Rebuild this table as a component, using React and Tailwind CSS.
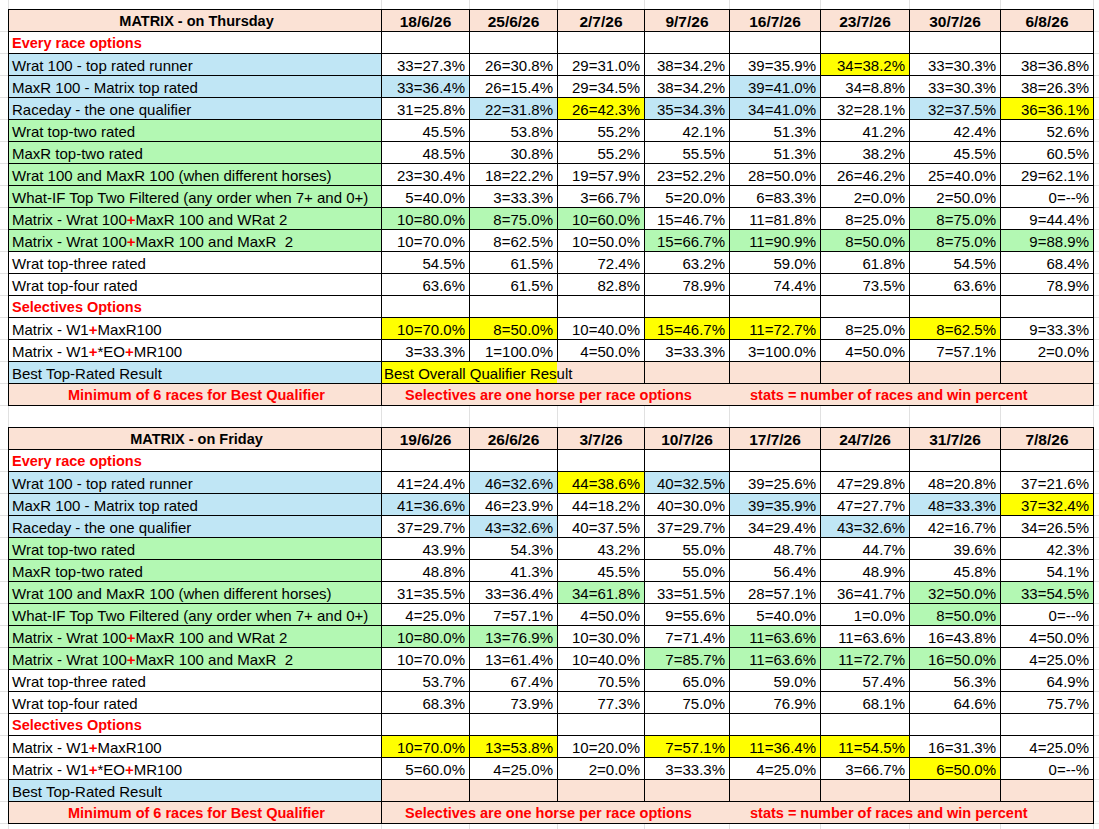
import React from "react";

const W = ["w-[88px]", "w-[88px]", "w-[87px]", "w-[85px]", "w-[91px]", "w-[89px]", "w-[91px]", "w-[93px]"];

const BG = {
  B: "bg-[#c0e6f5]",
  G: "bg-[#b3f8b3]",
  Y: "bg-[#ffff00]",
  P: "bg-[#fbe2d5]",
  W: "bg-white",
};

// "Y34=38.2%" -> yellow cell, plain value -> white cell
const cell = (v) => {
  const k = v[0];
  if (k === "Y" || k === "B" || k === "G") return { bg: BG[k], text: v.slice(1) };
  return { bg: BG.W, text: v };
};

const Plus = () => <span className="text-[#ff0000] font-bold">+</span>;

const thursday = {
  title: "MATRIX - on Thursday",
  dates: ["18/6/26", "25/6/26", "2/7/26", "9/7/26", "16/7/26", "23/7/26", "30/7/26", "6/8/26"],
  rows: [
    ["33=27.3%", "26=30.8%", "29=31.0%", "38=34.2%", "39=35.9%", "Y34=38.2%", "33=30.3%", "38=36.8%"],
    ["B33=36.4%", "26=15.4%", "29=34.5%", "38=34.2%", "B39=41.0%", "34=8.8%", "33=30.3%", "38=26.3%"],
    ["31=25.8%", "B22=31.8%", "Y26=42.3%", "B35=34.3%", "B34=41.0%", "32=28.1%", "B32=37.5%", "Y36=36.1%"],
    ["45.5%", "53.8%", "55.2%", "42.1%", "51.3%", "41.2%", "42.4%", "52.6%"],
    ["48.5%", "30.8%", "55.2%", "55.5%", "51.3%", "38.2%", "45.5%", "60.5%"],
    ["23=30.4%", "18=22.2%", "19=57.9%", "23=52.2%", "28=50.0%", "26=46.2%", "25=40.0%", "29=62.1%"],
    ["5=40.0%", "3=33.3%", "3=66.7%", "5=20.0%", "6=83.3%", "2=0.0%", "2=50.0%", "0=--%"],
    ["G10=80.0%", "G8=75.0%", "G10=60.0%", "15=46.7%", "11=81.8%", "8=25.0%", "G8=75.0%", "9=44.4%"],
    ["10=70.0%", "8=62.5%", "10=50.0%", "G15=66.7%", "G11=90.9%", "G8=50.0%", "G8=75.0%", "G9=88.9%"],
    ["54.5%", "61.5%", "72.4%", "63.2%", "59.0%", "61.8%", "54.5%", "68.4%"],
    ["63.6%", "61.5%", "82.8%", "78.9%", "74.4%", "73.5%", "63.6%", "78.9%"],
  ],
  sel: [
    ["Y10=70.0%", "Y8=50.0%", "10=40.0%", "Y15=46.7%", "Y11=72.7%", "8=25.0%", "Y8=62.5%", "9=33.3%"],
    ["3=33.3%", "1=100.0%", "4=50.0%", "3=33.3%", "3=100.0%", "4=50.0%", "7=57.1%", "2=0.0%"],
  ],
  bestOverall: true,
};

const friday = {
  title: "MATRIX - on Friday",
  dates: ["19/6/26", "26/6/26", "3/7/26", "10/7/26", "17/7/26", "24/7/26", "31/7/26", "7/8/26"],
  rows: [
    ["41=24.4%", "B46=32.6%", "Y44=38.6%", "B40=32.5%", "39=25.6%", "47=29.8%", "48=20.8%", "37=21.6%"],
    ["B41=36.6%", "46=23.9%", "44=18.2%", "40=30.0%", "B39=35.9%", "47=27.7%", "B48=33.3%", "Y37=32.4%"],
    ["37=29.7%", "B43=32.6%", "40=37.5%", "37=29.7%", "34=29.4%", "B43=32.6%", "42=16.7%", "34=26.5%"],
    ["43.9%", "54.3%", "43.2%", "55.0%", "48.7%", "44.7%", "39.6%", "42.3%"],
    ["48.8%", "41.3%", "45.5%", "55.0%", "56.4%", "48.9%", "45.8%", "54.1%"],
    ["31=35.5%", "33=36.4%", "G34=61.8%", "33=51.5%", "28=57.1%", "36=41.7%", "G32=50.0%", "G33=54.5%"],
    ["4=25.0%", "7=57.1%", "4=50.0%", "9=55.6%", "5=40.0%", "1=0.0%", "G8=50.0%", "0=--%"],
    ["G10=80.0%", "G13=76.9%", "10=30.0%", "7=71.4%", "G11=63.6%", "11=63.6%", "16=43.8%", "4=50.0%"],
    ["10=70.0%", "13=61.4%", "10=40.0%", "G7=85.7%", "G11=63.6%", "G11=72.7%", "G16=50.0%", "4=25.0%"],
    ["53.7%", "67.4%", "70.5%", "65.0%", "59.0%", "57.4%", "56.3%", "64.9%"],
    ["68.3%", "73.9%", "77.3%", "75.0%", "76.9%", "68.1%", "64.6%", "75.7%"],
  ],
  sel: [
    ["Y10=70.0%", "Y13=53.8%", "10=20.0%", "Y7=57.1%", "Y11=36.4%", "Y11=54.5%", "16=31.3%", "4=25.0%"],
    ["5=60.0%", "4=25.0%", "2=0.0%", "3=33.3%", "4=25.0%", "3=66.7%", "Y6=50.0%", "0=--%"],
  ],
  bestOverall: false,
};

const labels = [
  { t: "Wrat 100 - top rated runner", bg: BG.B },
  { t: "MaxR 100 - Matrix top rated", bg: BG.B },
  { t: "Raceday - the one qualifier", bg: BG.B },
  { t: "Wrat top-two rated", bg: BG.G },
  { t: "MaxR top-two rated", bg: BG.G },
  { t: "Wrat 100 and MaxR 100 (when different horses)", bg: BG.G },
  { t: "What-IF Top Two Filtered (any order when 7+ and 0+)", bg: BG.G },
  { t: <>Matrix - Wrat 100<Plus />MaxR 100 and WRat 2</>, bg: BG.G },
  { t: <>Matrix - Wrat 100<Plus />MaxR 100 and MaxR&nbsp; 2</>, bg: BG.G },
  { t: "Wrat top-three rated", bg: BG.W },
  { t: "Wrat top-four rated", bg: BG.W },
];

const selLabels = [
  <>Matrix - W1<Plus />MaxR100</>,
  <>Matrix - W1<Plus />*EO<Plus />MR100</>,
];

const Margin = () => <div className="w-[8px] h-full border-b border-[#e1e1e1]" />;
const RightMargin = () => <div className="flex-1 h-full border-b border-[#e1e1e1]" />;

const Row = ({ children, top }) => (
  <div className={`flex ${top ? "h-[23px]" : "h-[22px]"}`}>
    <Margin />
    {children}
    <RightMargin />
  </div>
);

const Label = ({ bg, top, children, className = "" }) => (
  <div
    className={`w-[374px] h-full shrink-0 border-l border-r border-b border-black flex items-center pt-[2px] pl-[3px] whitespace-nowrap ${top ? "border-t" : ""} ${bg} ${className}`}
  >
    {children}
  </div>
);

const Data = ({ i, bg, children, top }) => (
  <div
    className={`${W[i]} h-full shrink-0 border-r border-b border-black flex items-center justify-end pt-[2px] pr-[4px] whitespace-nowrap ${top ? "border-t" : ""} ${bg}`}
  >
    {children}
  </div>
);

const Table = ({ d }) => (
  <>
    <Row top>
      <Label bg={BG.P} top className="justify-center font-bold text-[14.5px]">
        {d.title}
      </Label>
      {d.dates.map((x, i) => (
        <div
          key={x}
          className={`${W[i]} h-full shrink-0 border-t border-r border-b border-black flex items-center justify-center pt-[2px] font-bold text-[15.5px] ${BG.P}`}
        >
          {x}
        </div>
      ))}
    </Row>
    <Row>
      <Label bg={BG.W} className="text-[#ff0000] font-bold text-[14.5px]">
        Every race options
      </Label>
      {W.map((_, i) => (
        <Data key={i} i={i} bg={BG.W} />
      ))}
    </Row>
    {d.rows.map((r, ri) => (
      <Row key={ri}>
        <Label bg={labels[ri].bg}>{labels[ri].t}</Label>
        {r.map((v, i) => {
          const c = cell(v);
          return (
            <Data key={i} i={i} bg={c.bg}>
              {c.text}
            </Data>
          );
        })}
      </Row>
    ))}
    <Row>
      <Label bg={BG.W} className="text-[#ff0000] font-bold text-[14.5px]">
        Selectives Options
      </Label>
      {W.map((_, i) => (
        <Data key={i} i={i} bg={BG.W} />
      ))}
    </Row>
    {d.sel.map((r, ri) => (
      <Row key={ri}>
        <Label bg={BG.W}>{selLabels[ri]}</Label>
        {r.map((v, i) => {
          const c = cell(v);
          return (
            <Data key={i} i={i} bg={c.bg}>
              {c.text}
            </Data>
          );
        })}
      </Row>
    ))}
    <Row>
      <Label bg={BG.B}>Best Top-Rated Result</Label>
      {d.bestOverall ? (
        <>
          <div className={`w-[175px] h-full shrink-0 border-b border-black flex items-center pt-[2px] pl-[2px] whitespace-nowrap ${BG.Y}`}>
            <span className="relative z-10">Best Overall Qualifier Result</span>
          </div>
          <div className={`w-[88px] h-full shrink-0 border-r border-b border-black ${BG.P}`} />
          {W.slice(3).map((_, i) => (
            <Data key={i} i={i + 3} bg={BG.P} />
          ))}
        </>
      ) : (
        W.map((_, i) => <Data key={i} i={i} bg={BG.P} />)
      )}
    </Row>
    <Row>
      <Label bg={BG.P} className="justify-center text-[#ff0000] font-bold text-[14.5px]">
        Minimum of 6 races for Best Qualifier
      </Label>
      <div className={`w-[712px] h-full shrink-0 border-r border-b border-black flex items-center pt-[2px] pl-[23px] whitespace-nowrap text-[#ff0000] font-bold text-[14.5px] ${BG.P}`}>
        <span className="w-[345px] shrink-0">Selectives are one horse per race options</span>
        <span>stats = number of races and win percent</span>
      </div>
    </Row>
  </>
);

const GapRow = ({ h }) => (
  <div className={`flex ${h}`}>
    <div className="w-[9px] h-full border-r border-[#e1e1e1]" />
    <div className="w-[373px] h-full border-r border-[#e1e1e1]" />
    {W.map((w, i) => (
      <div key={i} className={`${w} h-full shrink-0 border-r border-[#e1e1e1]`} />
    ))}
    <div className="flex-1" />
  </div>
);

export default function App() {
  return (
    <div className="w-[1099px] h-[829px] overflow-hidden bg-white text-black text-[15px] leading-none font-['Liberation_Sans',Arial,sans-serif]">
      <GapRow h="h-[9px]" />
      <Table d={thursday} />
      <GapRow h="h-[21px]" />
      <Table d={friday} />
      <GapRow h="h-[6px]" />
    </div>
  );
}
